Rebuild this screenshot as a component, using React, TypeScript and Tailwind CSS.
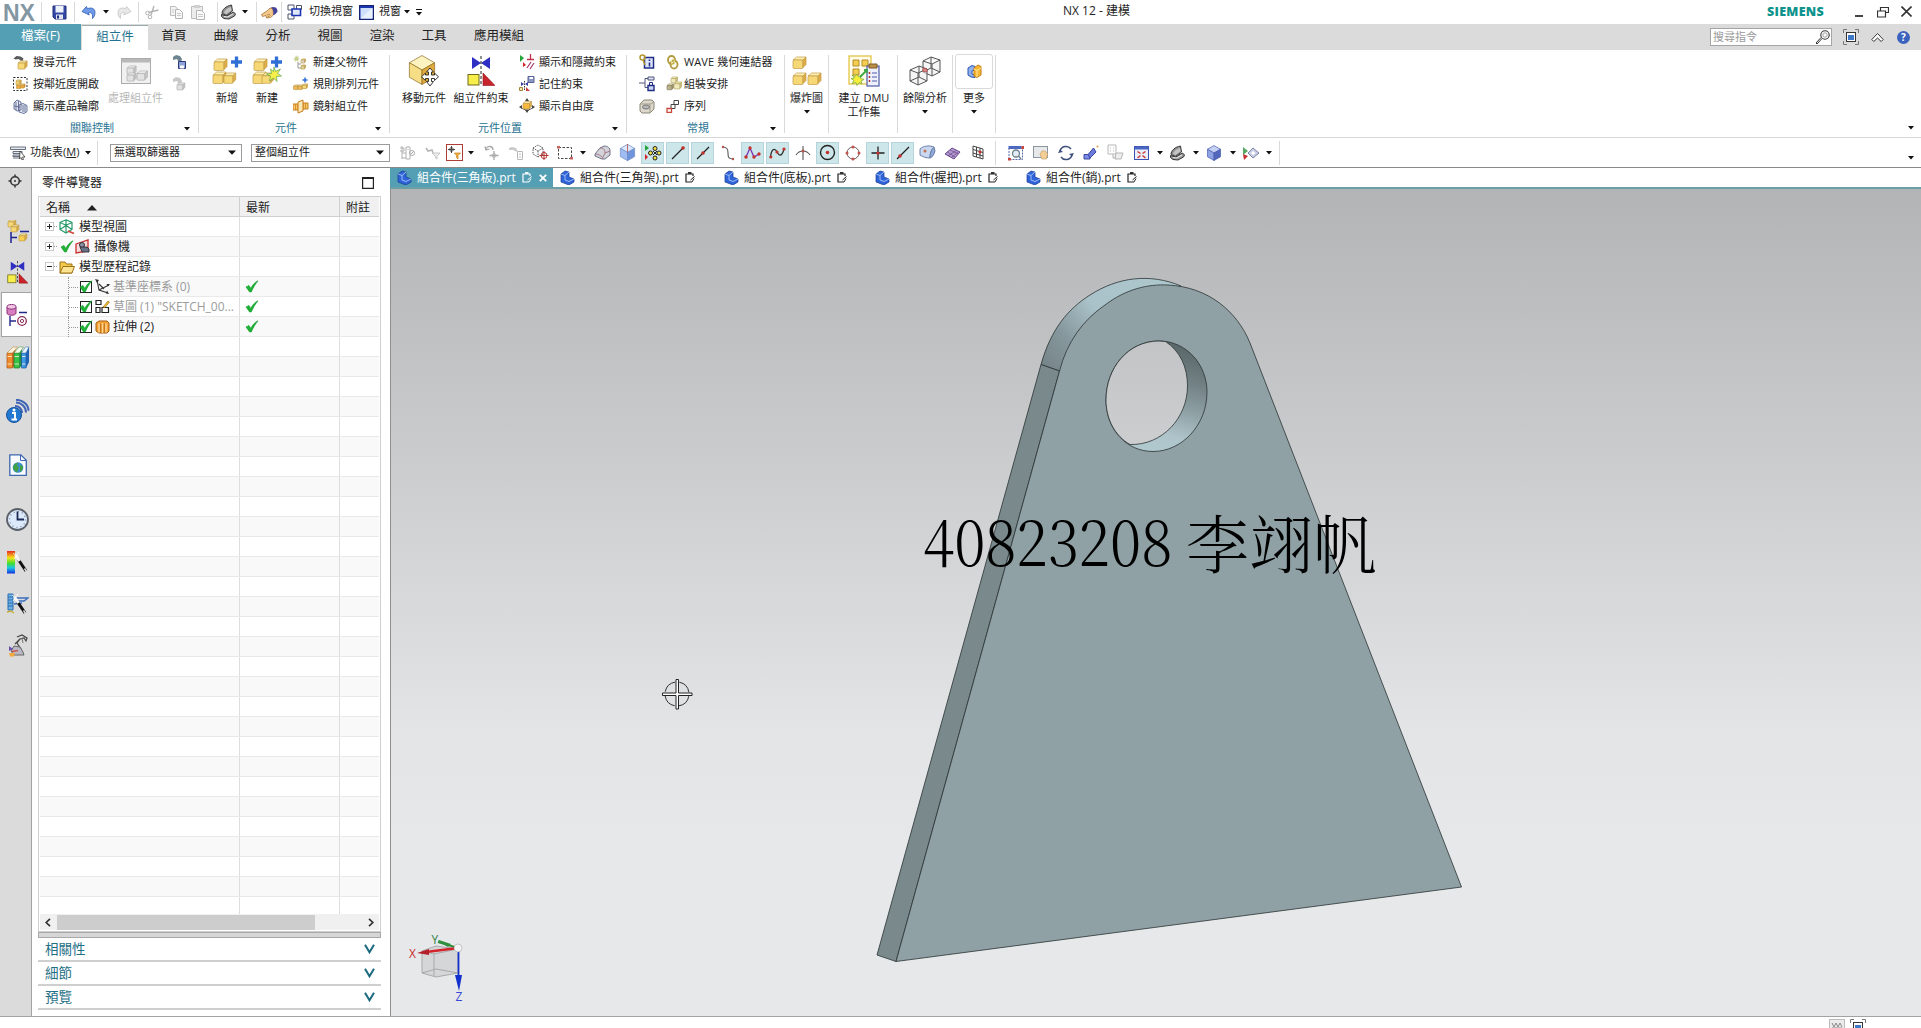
import React from "react";

type Kids = { children?: React.ReactNode };

/* ---------- drawing helpers ---------- */
function Svg({ w = 16, h, vw, vh, children }: Kids & { w?: number; h?: number; vw?: number; vh?: number }) {
  const hh = h ?? w;
  return (
    <svg width={w} height={hh} viewBox={`0 0 ${vw ?? w} ${vh ?? hh}`} fill="none" className="block shrink-0">
      {children}
    </svg>
  );
}

const GOLD = { t: "#fdf0b4", l: "#f6d877", r: "#dfae48", s: "#c29c46" };
const GREY = { t: "#f6f6f6", l: "#e2e2e2", r: "#c8c8c8", s: "#aeaeae" };
const BLUE = { t: "#c3d3f6", l: "#86a4e6", r: "#4a68c0", s: "#3f56a6" };

function Box({ x, y, s, c = GOLD }: { x: number; y: number; s: number; c?: typeof GOLD }) {
  const d = s * 0.3;
  return (
    <g stroke={c.s} strokeWidth={0.7} strokeLinejoin="round">
      <path d={`M${x} ${y + d}l${d * 1.2} ${-d}h${s - d * 0.2}l${-d} ${d}z`} fill={c.t} />
      <rect x={x} y={y + d} width={s} height={s * 0.85} rx={s * 0.1} fill={c.l} />
      <path d={`M${x + s} ${y + d}l${d} ${-d}v${s * 0.75}l${-d} ${d}z`} fill={c.r} />
    </g>
  );
}

function Cube({ x, y, s, c = BLUE }: { x: number; y: number; s: number; c?: typeof GOLD }) {
  const k = s * 0.87;
  const h = s / 2;
  return (
    <g stroke={c.s} strokeWidth={0.7} strokeLinejoin="round">
      <path d={`M${x} ${y - s}l${k} ${h}l${-k} ${h}l${-k} ${-h}z`} fill={c.t} />
      <path d={`M${x - k} ${y - h}l${k} ${h}v${s}l${-k} ${-h}z`} fill={c.l} />
      <path d={`M${x + k} ${y - h}l${-k} ${h}v${s}l${k} ${-h}z`} fill={c.r} />
    </g>
  );
}

const Plus = ({ x, y, s = 5 }: { x: number; y: number; s?: number }) => (
  <path d={`M${x - s} ${y}h${2 * s}M${x} ${y - s}v${2 * s}`} stroke="#2f6fd6" strokeWidth={s * 0.6} />
);

const Arrow = () => (
  <Svg w={6} h={4}>
    <path d="M0 0h6L3 3.6z" fill="#111" />
  </Svg>
);

const Check = () => (
  <Svg w={14} h={13}>
    <path d="M1 7l3-1.6 1.8 3C7.500 5 9.500 2.500 13 .8 10 4.500 8 8 6.300 12H4.600z" fill="#1fb235" stroke="#139a2b" strokeWidth={0.6} />
  </Svg>
);

/* ---------- quick-access icons ---------- */
const Save = () => (
  <Svg w={15}>
    <path d="M1 1h13v13H3l-2-2z" fill="#3446a5" stroke="#22307c" />
    <rect x={3.500} y={1} width={8} height={6.500} fill="#eef2fb" />
    <rect x={4} y={9.500} width={7} height={4.500} fill="#dfe3ee" />
    <rect x={5} y={10.500} width={2} height={3} fill="#22307c" />
  </Svg>
);
const Undo = ({ flip = false }: { flip?: boolean }) => (
  <svg width={15} height={14} viewBox="0 0 15 14" fill="none" className={flip ? "block -scale-x-100" : "block"}>
    <path d="M1 6.500l4.500-5 .8 2.200c4.500-1.700 7.700 0 7.700 3.800 0 2.500-1 4.500-2.500 6 .5-4-.5-6.500-4.200-5.800l1 2.300z" fill={flip ? "#e8e8e8" : "#6f9ae6"} stroke={flip ? "#c2c2c2" : "#2d5bb4"} strokeWidth={0.8} strokeLinejoin="round" />
  </svg>
);
const Cut = () => (
  <Svg w={15}>
    <path d="M9 1L6 10M3.500 7.500L13.500 5" stroke="#b4b4b4" strokeWidth={1.400} />
    <circle cx={5} cy={12} r={1.800} stroke="#b4b4b4" />
    <circle cx={2.500} cy={8} r={1.800} stroke="#b4b4b4" />
  </Svg>
);
const Copy = () => (
  <Svg w={15}>
    <path d="M1.500 1.500h5l1.500 2v7H1.500z" fill="#f3f3f3" stroke="#bcbcbc" />
    <path d="M6.500 4.500h4l3 3v6h-7z" fill="#f8f8f8" stroke="#b4b4b4" />
    <path d="M8 8.500h4M8 10.500h4M3 5h2M3 7h2" stroke="#c9c9c9" />
  </Svg>
);
const Paste = () => (
  <Svg w={16}>
    <path d="M1.500 2.500h11v12h-11z" fill="#ececec" stroke="#bcbcbc" />
    <path d="M4 1h6v3H4z" fill="#cfcfcf" />
    <path d="M6.500 6.500h5l3 3v6h-8z" fill="#fafafa" stroke="#b4b4b4" />
    <path d="M8 10.500h5M8 12.500h5" stroke="#c9c9c9" />
  </Svg>
);
const Iron = () => (
  <Svg w={17} h={16}>
    <path d="M2 9.500C2 5.500 6 2 11.500 1l1 6-6 4.500z" fill="#8e8e8e" stroke="#3a3a3a" strokeLinejoin="round" />
    <path d="M4 9c.5-2.500 3-5 7-6l.5 3.500L6.500 10z" fill="#c4c4c4" />
    <path d="M1.500 10.500l5 1.500 7-4 2 2-1 2-5.500 3-5-.5-2.500-2z" fill="#9a9a9a" stroke="#333" strokeLinejoin="round" />
    <path d="M4 12.500l3.500.5 5.500-3" stroke="#eee" />
  </Svg>
);
const Hand = () => (
  <Svg w={17} h={13}>
    <path d="M.5 8.500L6 5l3-3 3 1 .5 6-3 2.500-4 .5-.5-2.500-3.500 1z" fill="#f4c88a" stroke="#a5733a" strokeWidth={0.800} strokeLinejoin="round" />
    <path d="M6 9l3-1M6.500 11l3-1.500" stroke="#a5733a" strokeWidth={0.700} />
    <path d="M10 1l4 .2c1.500.5 2.500 2 2.500 4.500L14 8.500l-2 .5c1-3 0-6-2-8z" fill="#45429c" />
  </Svg>
);
const SwitchWin = () => (
  <Svg w={16}>
    <path d="M1 1h6v5H1zM9.500 1.500h5v4h-5zM1 10h6v5H1z" fill="#fff" stroke="#4a5568" />
    <path d="M5 5h8.500v6.500H5z" fill="#dfe8fb" stroke="#1c35b0" strokeWidth={1.600} />
  </Svg>
);
const WinIcon = () => (
  <Svg w={15}>
    <rect x={0.500} y={0.500} width={14} height={14} fill="#1c35b0" stroke="#16246f" />
    <rect x={1.500} y={3} width={12} height={10.500} fill="#cfe0fa" />
    <path d="M1.500 13.500L13.500 3v10.500z" fill="#e9f1fd" />
  </Svg>
);

/* ---------- ribbon icons ---------- */
const FindComp = ({ grey = false }: { grey?: boolean }) => (
  <Svg w={15}>
    <path d="M.5 3.500l3-2.500 4 .5 3 2-1 2.500-2-.5-2-1.500-3 .5z" fill={grey ? "#c4c4c4" : "#5a5a5a"} />
    <Box x={5} y={6} s={7} c={grey ? GREY : GOLD} />
  </Svg>
);
const Proximity = () => (
  <Svg w={15}>
    <rect x={0.500} y={0.500} width={13.500} height={13} stroke="#333" strokeDasharray="2 1.500" />
    <Box x={3} y={3} s={4} />
    <Box x={3.500} y={7} s={4} c={{ ...GOLD, l: "#f5a63a", r: "#d9822b" }} />
    <Box x={7.500} y={7} s={3.500} c={{ ...GOLD, l: "#f5a63a", r: "#d9822b" }} />
  </Svg>
);
const Outline = () => (
  <Svg w={15}>
    <g stroke="#5b6691" strokeWidth={0.900}>
      <path d="M1 4l3-3 4 2v8l-4 1-3-2zM6 6l4-1.500 4 2v6L11 14.500 6 13z" fill="#e6eaf5" />
      <path d="M3 3v8M5.500 2v9M10 6v7M12 6v7M1 7l6 1" />
    </g>
  </Svg>
);
const ProcAsm = () => (
  <Svg w={30} h={29}>
    <rect x={0.500} y={1.500} width={29} height={25} fill="#f1f1f1" stroke="#ababab" />
    <rect x={1} y={2} width={28} height={3.500} fill="#b9b9b9" />
    <Box x={6} y={9} s={7} c={GREY} />
    <Box x={6} y={16} s={7} c={GREY} />
    <Box x={16} y={14} s={8} c={GREY} />
  </Svg>
);
const SaveComp = ({ grey = false }: { grey?: boolean }) => (
  <Svg w={15}>
    <path d="M1 2l3-2 4 1 2 3-1 3-3-1-1-2-4 1z" fill={grey ? "#c9c9c9" : "#6d8590"} />
    {grey ? <Box x={5} y={6} s={6} c={GREY} /> : <path d="M6.500 6.500h7v7h-7z" fill="#8ea3d8" stroke="#2a377a" />}
    {!grey && <path d="M8 10.500h4v3H8z" fill="#fff" />}
  </Svg>
);
const AddComp = ({ fresh = false }: { fresh?: boolean }) => (
  <Svg w={31} h={30}>
    <Box x={2} y={3} s={10} />
    <Box x={1} y={16} s={10} />
    <Box x={fresh ? 10 : 12} y={17} s={9} />
    <Plus x={24.500} y={6} s={5.500} />
    {fresh && <path d="M22 11l1.500 4.500 5-2.500-3 4.500 4 2.500-5 .5.500 5-3.500-3.500-4 3 1-5-4-2 5-.5-1-4.500 3 2.500z" fill="#f7f04a" stroke="#5aa64a" strokeWidth={0.700} />}
  </Svg>
);
const NewParent = () => (
  <Svg w={15}>
    <path d="M3 0l1 2 2-1-1 2 2 1-2 .5.500 2.500-2-1.500L1.500 7 2 4.500 0 4l2-1z" fill="#c6cf8d" />
    <path d="M5 7v6h3M5 9h3" stroke="#999" />
    <Box x={8} y={4} s={3.500} c={{ ...GOLD, l: "#dadada", r: "#bbb" }} />
    <Box x={8} y={10} s={3.500} c={{ ...GOLD, l: "#ddd7a4", r: "#bbb" }} />
  </Svg>
);
const PatternComp = () => (
  <Svg w={15}>
    <Plus x={12} y={3} s={2.500} />
    <Box x={0.500} y={8} s={4} c={{ ...GOLD, l: "#f2b95c" }} />
    <Box x={5} y={8} s={4} c={{ ...GOLD, l: "#f2b95c" }} />
    <Box x={9.500} y={7} s={4} />
  </Svg>
);
const MirrorAsm = () => (
  <Svg w={16} h={15}>
    <path d="M0 5h5v6H0zM10 4h5v6h-5z" fill="#f8c765" stroke="#c77e1e" />
    <path d="M5 3l5-2v11l-5 2z" fill="#fbe6b4" stroke="#c77e1e" />
    <path d="M2.500 5v6M12.500 4v6" stroke="#c77e1e" strokeWidth={0.700} />
  </Svg>
);
const MoveComp = () => (
  <Svg w={32} h={32}>
    <Cube x={14} y={15} s={14.500} c={{ t: "#fdf3c0", l: "#f6de86", r: "#dfa93e", s: "#8d6c25" }} />
    <path d="M22 13l3.500 4h-2v3h3v-2l4 3.800-4 3.700v-2h-3v3h2L22 31l-3.500-4.500h2v-3h-3v2l-4-3.700 4-3.800v2h3v-3h-2z" fill="#fff" stroke="#222" strokeWidth={0.900} />
  </Svg>
);
const Constraint = ({ w = 28 }: { w?: number }) => (
  <Svg w={w} vw={28} vh={30} h={(w * 30) / 28}>
    <path d="M5 1l9 6-9 6zM23 1l-9 6 9 6z" fill="#2f2fc4" />
    <path d="M14 0v30" stroke="#222" strokeDasharray="3 2" />
    <rect x={1} y={18.500} width={11} height={10.500} fill="#f7ee4a" stroke="#6d6a1c" />
    <path d="M16 17v12.500h12z" fill="#c8242b" stroke="#8b1117" strokeWidth={0.600} />
  </Svg>
);
const ShowHide = () => (
  <Svg w={16}>
    <path d="M1 1l4 3-4 4z" fill="#25a53a" />
    <path d="M4 8l3 3-3 2z" fill="#d3232a" />
    <path d="M8 5.500h7M11.500 0v5.500" stroke="#c3304a" strokeWidth={1.300} />
    <path d="M8 14l4-6M11 15l4-6" stroke="#a8346a" strokeWidth={1.200} />
  </Svg>
);
const Remember = () => (
  <Svg w={16}>
    <path d="M9 .5h6v6H9z" fill="#8c97c4" stroke="#5a6596" />
    <path d="M10.500 1h3.500v2h-3.500z" fill="#fff" />
    <path d="M2 6l3 2-3 2zM9 6L6 8l3 2z" fill="#3c3ca8" />
    <path d="M5.500 5v10" stroke="#333" strokeDasharray="1.500 1" />
    <path d="M.5 11.500h3v3h-3z" stroke="#a4863a" fill="#f6e9b4" />
    <path d="M7 11v4h4z" fill="#c8403b" />
  </Svg>
);
const Dof = () => (
  <Svg w={16}>
    <path d="M8 0l2 3H6zM8 15l2-3H6zM0 9l3-2v4zM16 9l-3-2v4z" fill="#444" />
    <path d="M2 9c3 4 9 4 12 0" stroke="#444" />
    <Box x={4} y={3.500} s={6.500} c={{ ...GOLD, l: "#f6b93e" }} />
  </Svg>
);
const InfoLink = () => (
  <Svg w={16}>
    <path d="M5.500 3.500h9v10.500h-9z" fill="#dfe6fa" stroke="#1f2c86" strokeWidth={1.500} />
    <path d="M10.500 5.500v1.500M10.500 8.500v4" stroke="#1f2c86" strokeWidth={1.600} />
    <circle cx={3.500} cy={3.500} r={2.500} stroke="#b79a2d" strokeWidth={1.500} />
    <path d="M4 6l2 5" stroke="#b79a2d" strokeWidth={1.500} />
  </Svg>
);
const TreeLock = () => (
  <Svg w={16}>
    <path d="M0 7h6M6 2.500v9M6 2.500h3M6 11.500h3" stroke="#50577c" />
    <path d="M9 1h6v3H9z" fill="#dfe3f2" stroke="#50577c" />
    <path d="M9 9.500h6v5H9z" fill="#cdd6f5" stroke="#1f2c86" strokeWidth={1.400} />
    <path d="M10.500 9V6.500h3V9" stroke="#1f2c86" />
  </Svg>
);
const Disc = () => (
  <Svg w={16}>
    <path d="M1 6l4-4h8l2 2v7l-4 4H3l-2-2z" fill="#dcd8cc" stroke="#8b8674" strokeLinejoin="round" />
    <path d="M1 6h10l4-2M11 6v9" stroke="#a29d8a" />
    <ellipse cx={7} cy={9} rx={3.500} ry={2} fill="#b9b9b9" stroke="#777" />
  </Svg>
);
const Wave = () => (
  <Svg w={15}>
    <g stroke="#b29a3e" strokeWidth={1.800}>
      <ellipse cx={5.500} cy={5} rx={3.500} ry={4} />
      <ellipse cx={8} cy={9.500} rx={3.500} ry={4} />
    </g>
    <ellipse cx={7} cy={7} rx={1.500} ry={3} stroke="#efe08a" />
  </Svg>
);
const Arrange = () => (
  <Svg w={16}>
    <Box x={5} y={1} s={5} c={{ ...GOLD, l: "#f1ebbc", r: "#cfc080", s: "#b5a96c" }} />
    <Box x={1} y={8} s={5} c={{ ...GOLD, l: "#b9b38f", r: "#968f66", s: "#8a8363" }} />
    <Box x={8} y={6} s={6} c={{ ...GOLD, l: "#f1ebbc", r: "#cfc080", s: "#b5a96c" }} />
  </Svg>
);
const Sequence = () => (
  <Svg w={14}>
    <path d="M8 1.500h4.500v4H8zM5 5.500h4v4H5z" fill="#fff" stroke="#444" />
    <path d="M1 9.500h4.500v4H1z" fill="#fff" stroke="#c94a3a" strokeWidth={1.300} />
  </Svg>
);
const Explode = () => (
  <Svg w={30} h={30}>
    <Box x={1} y={1} s={10} />
    <Box x={1} y={17} s={10} />
    <Box x={16} y={17} s={10} />
  </Svg>
);
const Dmu = () => (
  <Svg w={32} h={33}>
    <rect x={1} y={1} width={22} height={28} fill="#fffde8" stroke="#e3c445" strokeWidth={1.300} />
    <path d="M5 5h6v6H5zM14 5h6v6h-6zM5 14h6v6H5z" fill="#f3cf51" stroke="#b58a2c" />
    <path d="M9 19l1.500 3 3-2-1 3.500 3.500 1-3 1.500 1 3-3-1.500-2 3-1-3-4 1 2-3-3-2 3.500-.500L4 20l3 1.500z" fill="#f9ee3a" stroke="#6aa63a" strokeWidth={0.700} />
    <rect x={19} y={11} width={12} height={20} fill="#eef1fd" stroke="#4c5ba6" strokeWidth={1.200} />
    <path d="M21 9h8v4h-8z" fill="#b98f46" stroke="#7d5d28" />
    <path d="M24 18h5M24 22h5M24 26h5" stroke="#4c5ba6" />
    <path d="M21.500 17v2M21.500 21v2M21.500 25v2" stroke="#b3342e" strokeWidth={1.500} />
    <path d="M12 22l7-7m-3 0h3v3" stroke="#3da74a" strokeWidth={1.800} />
  </Svg>
);
const Clearance = () => (
  <Svg w={32} h={31}>
    <g stroke="#555" strokeWidth={1} strokeLinejoin="round">
      <path d="M14 5l8-4 9 3v12l-8 4-9-4zM14 5l9 3 8-4M23 8v12M22 1v11l-8 4M22 12l9 4" fill="#eeeeee" fillOpacity={0.600} />
      <path d="M1 14l9-4 8 3v12l-9 4-8-4zM1 14l8 3 9-4M9 17v12M10 10v11l-9 4M10 21l8 4" fill="#eeeeee" fillOpacity={0.600} />
    </g>
    <path d="M14 12l4 1v3l-4-.5z" fill="#d98989" stroke="#b04444" strokeWidth={0.700} />
  </Svg>
);
const More = () => (
  <Svg w={15}>
    <path d="M1 4l4-2.500 3 1V6L5 7v3l3 1v2.500l-4-.5-3-2z" fill="#8fb0ee" stroke="#2c52ad" />
    <path d="M7 4l4-3 3 1.500V11l-4 2.500L7 12z" fill="#f7b731" stroke="#c67d13" />
    <path d="M7 5l3 1.500L14 4M10 6.500V13" stroke="#fde39b" />
  </Svg>
);

/* ---------- selection / view toolbar icons ---------- */
const I: Record<string, React.ReactNode> = {
  menu: (
    <Svg w={17} h={14}>
      <path d="M.5 1h15v2.500H.5zM3 5.500h9v2H3zM3 9h7v1.500H3zM3 12h7" fill="#e5e9f0" stroke="#5a6270" strokeWidth={0.900} />
      <path d="M10 5l5 6h-2.500l1 2.500-1.500.5-1-2.500-1.500 1.500z" fill="#fff" stroke="#333" strokeWidth={0.800} />
    </Svg>
  ),
  g1: (
    <Svg w={16}>
      <path d="M1 3h4v3H1M3 1v13M3 8h4M3 13h4M7 2h4v12H7zM9 4v1" stroke="#b0b0b0" />
      <circle cx={13} cy={8} r={2.500} stroke="#b0b0b0" />
      <path d="M11 10l4-4" stroke="#b0b0b0" />
    </Svg>
  ),
  g2: (
    <Svg w={16}>
      <path d="M1 3l2 3 4-1 1 3" stroke="#b5b5b5" strokeWidth={1.600} />
      <path d="M7 8h8l-3 3.500V14l-1.500-1v-1.500z" fill="#eee" stroke="#c6c6c6" />
    </Svg>
  ),
  filt: (
    <Svg w={17}>
      <rect x={0.500} y={0.500} width={16} height={16} fill="#fff" stroke="#b03c38" />
      <path d="M2 5.500h7M5.500 2v7" stroke="#444" />
      <circle cx={5.500} cy={5.500} r={1.900} stroke="#444" strokeWidth={0.800} />
      <path d="M8.500 9h6L12 11.500V15l-1.500-1.500v-2z" fill="#f6b13c" stroke="#c67d13" strokeWidth={0.700} />
    </Svg>
  ),
  g3: (
    <Svg w={16}>
      <path d="M2 4c2-4 7-3 7 1M1 1.500L2 5l3.500-1" stroke="#a8a8a8" strokeWidth={1.300} />
      <path d="M10 6v9M5.500 10.500h9" stroke="#a8a8a8" strokeWidth={1.300} />
      <circle cx={10} cy={10.500} r={2} stroke="#b8b8b8" />
    </Svg>
  ),
  g4: (
    <Svg w={16}>
      <path d="M1 3l3-1 4 1 2 4-3-1-2-1H1z" fill="#c9c9c9" />
      <path d="M9.500 6.500h5v8h-5zM11 9h2M11 12h2" stroke="#b8b8b8" />
    </Svg>
  ),
  dcube: (
    <Svg w={17}>
      <path d="M1 4l5-3 5 3v6l-5 3-5-3zM1 4l5 3 5-3M6 7v6" stroke="#555" strokeDasharray="1.500 1" />
      <circle cx={12} cy={11.500} r={3} stroke="#b3342e" />
      <path d="M12 7v9M7.500 11.500h9" stroke="#b3342e" />
    </Svg>
  ),
  rect: (
    <Svg w={16}>
      <rect x={1.500} y={2.500} width={13} height={11} stroke="#444" strokeDasharray="2.500 1.500" />
      <path d="M0 1h3v2.500H0zM13 12h3v2.500h-3z" fill="#c9655f" />
    </Svg>
  ),
  shade: (
    <Svg w={17} h={15}>
      <path d="M1 9l5-6 4-2c4 0 6 2 6 5v4l-5 4H8L1 11z" fill="#d3d3dc" stroke="#6f7388" strokeLinejoin="round" />
      <path d="M6 3c3 0 5 1 5 5l-3 6M1 9c3 0 5 1 7 3M11 8l5-2" stroke="#a0707a" strokeWidth={0.900} />
    </Svg>
  ),
  bcube: (
    <Svg w={17}>
      <Cube x={8.500} y={8.500} s={8.200} c={{ t: "#dbe8fb", l: "#9fbdf0", r: "#6f95dd", s: "#6c8bc9" }} />
      <path d="M8.500 0v8.500" stroke="#b3342e" strokeWidth={0.700} />
    </Svg>
  ),
  pts: (
    <Svg w={18}>
      <path d="M1 1l4 3-4 3z" fill="#25a53a" />
      <path d="M1 10l3 3-3 3z" fill="#d3232a" />
      <g fill="#f4e23f" stroke="#222">
        <circle cx={11} cy={4.500} r={2} />
        <circle cx={6.500} cy={9} r={2} />
        <circle cx={15} cy={9} r={2} />
        <circle cx={11} cy={14} r={2} />
      </g>
      <path d="M9 7l4 4M13 7l-4 4" stroke="#222" />
    </Svg>
  ),
  end: (
    <Svg w={16}>
      <path d="M2 14L14 2" stroke="#222" strokeWidth={1.300} />
      <circle cx={13} cy={3} r={1.800} fill="#c4302c" />
    </Svg>
  ),
  mid: (
    <Svg w={16}>
      <path d="M2 14L14 2" stroke="#222" strokeWidth={1.300} />
      <circle cx={8} cy={8} r={1.800} fill="#c4302c" />
    </Svg>
  ),
  ctrl: (
    <Svg w={14} h={16}>
      <path d="M1 2c5 0 6 2 6 6s0 6 6 6" stroke="#555" strokeWidth={1.100} />
      <circle cx={2} cy={2} r={1.200} fill="#b3544c" />
      <circle cx={12} cy={14} r={1.200} fill="#b3544c" />
    </Svg>
  ),
  poly: (
    <Svg w={17} h={15}>
      <path d="M2 12L6 3l4 9 5-3" stroke="#7a2fb8" strokeWidth={1.300} />
      <g fill="#c4302c">
        <circle cx={2} cy={12} r={1.700} />
        <circle cx={6} cy={3} r={1.700} />
        <circle cx={10} cy={12} r={1.700} />
        <circle cx={15} cy={9} r={1.700} />
      </g>
    </Svg>
  ),
  spl: (
    <Svg w={17} h={14}>
      <path d="M1.500 11C2.500 2 6 2 8 6s5 5 7-3" stroke="#333" strokeWidth={1.300} />
      <g fill="#c4302c">
        <circle cx={1.800} cy={11} r={1.600} />
        <circle cx={8} cy={6} r={1.600} />
        <circle cx={15} cy={3} r={1.600} />
      </g>
    </Svg>
  ),
  inter: (
    <Svg w={16}>
      <path d="M8 1v14M1 10c2-3 4-4 7-4s5 1 7 4" stroke="#555" strokeWidth={1.100} />
      <circle cx={8} cy={6} r={1.500} fill="#b3544c" />
    </Svg>
  ),
  arc: (
    <Svg w={17}>
      <circle cx={8.500} cy={8.500} r={7} stroke="#222" strokeWidth={1.400} />
      <circle cx={8.500} cy={8.500} r={1.800} fill="#c4302c" />
    </Svg>
  ),
  quad: (
    <Svg w={16}>
      <circle cx={8} cy={8} r={6} stroke="#6b5a5a" />
      <g fill="#c4514c">
        <circle cx={8} cy={2} r={1.500} />
        <circle cx={8} cy={14} r={1.500} />
        <circle cx={2} cy={8} r={1.500} />
        <circle cx={14} cy={8} r={1.500} />
      </g>
    </Svg>
  ),
  exist: (
    <Svg w={16}>
      <path d="M8 1.500v13M1.500 8h13" stroke="#222" strokeWidth={1.300} />
      <circle cx={8} cy={8} r={1.600} fill="#c4302c" />
    </Svg>
  ),
  onc: (
    <Svg w={16}>
      <path d="M2 14L14 2" stroke="#222" strokeWidth={1.300} />
      <circle cx={5} cy={11} r={1.800} fill="#c4302c" />
    </Svg>
  ),
  face: (
    <Svg w={17} h={15}>
      <path d="M1 4c3-3 9-4 14-2-3 3-4 6-4 11-4 0-7-1-10-3z" fill="#c9d8f0" stroke="#6a7fa8" strokeLinejoin="round" />
      <path d="M11 13c0-5 1-8 4-11l1 4c-1 3-2 6-5 7z" fill="#8fa9d8" stroke="#6a7fa8" />
      <circle cx={6} cy={6} r={1.500} fill="#c4714c" />
    </Svg>
  ),
  mesh: (
    <Svg w={17} h={14}>
      <path d="M1 8l7-6 8 4-6 7z" fill="#b79ad0" stroke="#65468c" />
      <path d="M3.500 6l7.500 5M6 4l8 4M4 10l8-5.500M7 12l7-6" stroke="#65468c" strokeWidth={0.700} />
    </Svg>
  ),
  grid: (
    <Svg w={14} h={15}>
      <path d="M2 1l10 3v10L2 11zM5.500 2v10M9 3v10M2 4.500l10 3M2 8l10 3" stroke="#444" />
      <circle cx={9} cy={7} r={1.500} fill="#c4302c" />
    </Svg>
  ),
  fit: (
    <Svg w={16}>
      <path d="M.5 1h13v3H.5z" fill="#4a66c4" />
      <rect x={1} y={3} width={13.500} height={11.500} stroke="#5a6bb0" strokeDasharray="2 1" />
      <circle cx={8} cy={8.500} r={3.500} fill="#e3edf3" stroke="#6b7f8c" strokeWidth={1.300} />
      <path d="M10.500 11l2.500 3" stroke="#6b7f8c" strokeWidth={1.300} />
      <path d="M0 13h3v2.500H0zM13.500 1H16v3h-2.500z" fill="#c9453f" />
    </Svg>
  ),
  pan: (
    <Svg w={16} h={14}>
      <rect x={0.500} y={0.500} width={14} height={11} fill="#e6e8ea" stroke="#8b96a0" />
      <path d="M7 8l2-3 3 0 2.500 3-1 5H9z" fill="#f4cf95" stroke="#c9a063" strokeWidth={0.700} />
    </Svg>
  ),
  rot: (
    <Svg w={16}>
      <path d="M2 6a6.200 6.200 0 0111-2M14 10a6.200 6.200 0 01-11 2" stroke="#3e4f7c" strokeWidth={1.500} />
      <path d="M0 8l2-3.500L5 7zM16 8l-2 3.500L11 9z" fill="#3e4f7c" />
    </Svg>
  ),
  torch: (
    <Svg w={16} h={15}>
      <path d="M1 9.500h6v4.500H1z" fill="#7d8ce6" stroke="#3a46a0" />
      <path d="M5 9.500L10.500 3l2.500 4-6 6z" fill="#6a7bdc" stroke="#3a46a0" />
      <circle cx={14.500} cy={1.500} r={1} fill="#e0a53a" />
    </Svg>
  ),
  cpy: (
    <Svg w={17}>
      <path d="M1 1h8v9H1zM3 4h1M6 4h1M3 7h1M6 7h1" stroke="#b5b5b5" />
      <path d="M6 10v4h3M9 9h7l-2 6H8z" fill="#eee" stroke="#b5b5b5" />
    </Svg>
  ),
  win4: (
    <Svg w={15} h={14}>
      <rect x={0.500} y={0.500} width={14} height={13} fill="#e9eefb" stroke="#3b53ae" />
      <path d="M.5.500h14v3H.5z" fill="#4a66c4" />
      <path d="M3.500 5.500l3 2M11.500 5.500l-3 2M3.500 12l3-2.500M11.500 12l-3-2.500" stroke="#d0392f" strokeWidth={1.500} />
    </Svg>
  ),
  scube: (
    <Svg w={16}>
      <Cube x={8} y={8} s={7.500} c={{ t: "#c5d0f5", l: "#8ea3e6", r: "#5266bb", s: "#4a5cae" }} />
    </Svg>
  ),
  clip: (
    <Svg w={18} h={14}>
      <path d="M1 1l5 4-5 4z" fill="#56a862" />
      <path d="M1 8l5 2-4 4z" fill="#c4302c" />
      <path d="M6 7l5-5 6 5-6 5z" fill="#c9d0e6" stroke="#7a84a8" />
      <path d="M9 7l2-2 2.500 2L11 9z" fill="#fff" />
    </Svg>
  ),
};

const Cell = ({ k, w = "w-[25px]", on = false }: { k: string; w?: string; on?: boolean }) => (
  <div className={`flex h-[22px] shrink-0 items-center justify-center ${w}`}>
    <div className={on ? "flex h-[22px] w-[23px] shrink-0 items-center justify-center border border-[#b3d5db] bg-[#cde6ea]" : "shrink-0"}>
      {k === "v" ? <Arrow /> : k === "iron" ? <Iron /> : I[k]}
    </div>
  </div>
);

const VSep = ({ c = "" }: { c?: string }) => <div className={`w-px shrink-0 bg-[#d9d9d9] ${c}`} />;

/* ---------- top bars ---------- */
function TitleBar() {
  return (
    <div className="flex h-6 items-center bg-white text-[11px] text-[#222]">
      <div className="mt-[2px] w-[41px] pl-[3px] font-['Liberation_Sans'] text-[23px] leading-[22px] font-bold text-[#8397a3]">NX</div>
      <VSep c="h-5" />
      <div className="flex w-8 justify-center pl-[2px]"><Save /></div>
      <VSep c="h-5" />
      <div className="flex w-[26px] justify-center"><Undo /></div>
      <div className="flex w-[10px] justify-center"><Arrow /></div>
      <div className="flex w-[27px] justify-center"><Undo flip /></div>
      <VSep c="h-5" />
      <div className="flex w-[27px] justify-center"><Cut /></div>
      <div className="flex w-[20px] justify-center"><Copy /></div>
      <div className="flex w-[24px] justify-center"><Paste /></div>
      <VSep c="ml-[7px] h-5" />
      <div className="flex w-[20px] justify-center"><Iron /></div>
      <div className="flex w-[14px] justify-center"><Arrow /></div>
      <VSep c="ml-1 h-5" />
      <div className="flex w-[24px] justify-center pl-px"><Hand /></div>
      <VSep c="h-5" />
      <div className="ml-[5px] w-[22px]"><SwitchWin /></div>
      <div className="w-[50px] pb-[2px] whitespace-nowrap">切換視窗</div>
      <div className="w-5"><WinIcon /></div>
      <div className="w-[25px] pb-[2px] whitespace-nowrap">視窗</div>
      <Arrow />
      <div className="ml-[6px]">
        <Svg w={6} h={7}><path d="M0 .5h6" stroke="#111" /><path d="M0 3h6L3 6.600z" fill="#111" /></Svg>
      </div>
      <div className="ml-[641px] w-[704px] pb-[2px] text-[12px] whitespace-nowrap">NX 12 - 建模</div>
      <div className="w-[88px] font-['Open_Sans'] text-[12.5px] leading-6 font-extrabold tracking-[0.3px] text-[#0d938c]">SIEMENS</div>
      <div className="mt-[7px] h-[2px] w-2 bg-[#444]" />
      <div className="ml-[14px]">
        <Svg w={12} h={11}><path d="M3.500 3.500v-3h8v5h-3M.5 4h8v6h-8z" stroke="#333" strokeWidth={1.200} /></Svg>
      </div>
      <div className="mb-[2px] ml-3">
        <Svg w={11}><path d="M.5.500l10 10M10.500.500l-10 10" stroke="#333" strokeWidth={1.600} /></Svg>
      </div>
    </div>
  );
}

const FullIcon = () => (
  <Svg w={16}>
    <path d="M.5 4V.5H4M12 .5h3.500V4M15.500 12v3.500H12M4 15.500H.5V12" stroke="#777" />
    <rect x={3.500} y={3.500} width={9} height={9} fill="#fff" stroke="#333" />
    <rect x={5} y={6} width={6} height={5} fill="#3f78c9" />
  </Svg>
);

function TabBar() {
  const tabs = ["首頁", "曲線", "分析", "視圖", "渲染", "工具"];
  return (
    <div className="flex h-[26px] items-center bg-[#dbdbdb] text-[12.5px] text-[#222]">
      <div className="flex h-full w-[81px] items-center justify-center bg-[#559fb5] pb-[2px] text-white">檔案(F)</div>
      <div className="mt-px ml-px flex h-[25px] w-[66px] items-center justify-center border-t border-[#9aa] bg-white pb-[2px] text-[#1f7391]">組立件</div>
      {tabs.map((t) => (
        <div key={t} className="w-[52px] pb-[2px] text-center">{t}</div>
      ))}
      <div className="w-[78px] pb-[2px] text-center">應用模組</div>
      <div className="mr-[11px] ml-auto flex h-[18px] w-[122px] items-center justify-between border border-[#a5a5a5] bg-white pl-[2px] text-[11px] text-[#9a9a9a]">
        <span>搜尋指令</span>
        <Svg w={16} h={15}>
          <circle cx={10} cy={5} r={4.200} stroke="#333" strokeWidth={1.100} />
          <circle cx={10} cy={5} r={2.200} stroke="#888" strokeWidth={0.800} />
          <path d="M7 8.500L2 14l-1-1 5-5.500" stroke="#333" fill="#fff" />
        </Svg>
      </div>
      <FullIcon />
      <div className="ml-3">
        <Svg w={13} h={11}><path d="M.8 7.500l5.700-6 5.700 6-2 2-3.700-3.500L2.800 9.500z" fill="#fff" stroke="#333" /></Svg>
      </div>
      <div className="mr-[11px] ml-[13px] flex size-[13px] items-center justify-center rounded-full bg-[#3b62bd] text-[10px] leading-none font-bold text-white">?</div>
    </div>
  );
}

/* ---------- ribbon ---------- */
const SmallCol = ({ items, c = "" }: { items: [React.ReactNode, string][]; c?: string }) => (
  <div className={`flex flex-col pt-px ${c}`}>
    {items.map(([icon, label], i) => (
      <div key={i} className="flex h-[22px] items-center whitespace-nowrap">
        <div className="flex w-5 shrink-0 items-center">{icon}</div>
        {label}
      </div>
    ))}
  </div>
);

const Big = ({ icon, label, sub, c }: { icon: React.ReactNode; label: string; sub?: React.ReactNode; c: string }) => (
  <div className={`flex shrink-0 flex-col items-center pt-[5px] whitespace-nowrap ${c}`}>
    <div className="flex h-8 items-center">{icon}</div>
    <div className="mt-1 h-[14px] leading-[14px]">{label}</div>
    <div className="flex h-[14px] items-center leading-[14px]">{sub}</div>
  </div>
);

const Group = ({ c, label, labelC, children }: Kids & { c: string; label?: string; labelC?: string }) => (
  <div className={`flex shrink-0 flex-col ${c}`}>
    <div className="flex h-[70px]">{children}</div>
    {label && (
      <div className="flex h-[17px] items-center justify-between pr-2 text-[#1f7391]">
        <span className={labelC}>{label}</span>
        <Arrow />
      </div>
    )}
  </div>
);

function Ribbon() {
  return (
    <div className="flex h-[88px] border-b border-[#d6d6d6] bg-white text-[11px] text-[#222]">
      <Group c="w-[198px]" label="關聯控制" labelC="ml-[70px]">
        <SmallCol c="ml-[13px] w-[96px]" items={[[<FindComp />, "搜尋元件"], [<Proximity />, "按鄰近度開啟"], [<Outline />, "顯示產品輪廓"]]} />
        <Big c="w-[53px] text-[#b9b9b9]" icon={<ProcAsm />} label="處理組立件" />
        <SmallCol c="ml-[10px] w-5" items={[[<SaveComp />, ""], [<SaveComp grey />, ""]]} />
      </Group>
      <VSep c="mt-[5px] h-[78px]" />
      <Group c="w-[190px]" label="元件" labelC="ml-[76px]">
        <Big c="ml-[8px] w-10" icon={<AddComp />} label="新增" />
        <Big c="w-10" icon={<AddComp fresh />} label="新建" />
        <SmallCol c="ml-[6px]" items={[[<NewParent />, "新建父物件"], [<PatternComp />, "規則排列元件"], [<MirrorAsm />, "鏡射組立件"]]} />
      </Group>
      <VSep c="mt-[5px] h-[78px]" />
      <Group c="w-[236px]" label="元件位置" labelC="ml-[88px]">
        <Big c="ml-[6px] w-[56px]" icon={<MoveComp />} label="移動元件" />
        <Big c="w-[58px]" icon={<Constraint />} label="組立件約束" />
        <SmallCol c="ml-[9px]" items={[[<ShowHide />, "顯示和隱藏約束"], [<Remember />, "記住約束"], [<Dof />, "顯示自由度"]]} />
      </Group>
      <VSep c="mt-[5px] h-[78px]" />
      <Group c="w-[157px]" label="常規" labelC="ml-[60px]">
        <SmallCol c="ml-[12px] w-[27px]" items={[[<InfoLink />, ""], [<TreeLock />, ""], [<Disc />, ""]]} />
        <SmallCol c="tracking-[0.1px] [&>div>div]:w-[18px]" items={[[<Wave />, "WAVE 幾何連結器"], [<Arrange />, "組裝安排"], [<Sequence />, "序列"]]} />
      </Group>
      <VSep c="mt-[5px] h-[78px]" />
      <Group c="w-[43px]"><Big c="w-[43px]" icon={<Explode />} label="爆炸圖" sub={<Arrow />} /></Group>
      <VSep c="mt-[5px] h-[78px]" />
      <Group c="w-[68px]"><Big c="w-[70px]" icon={<Dmu />} label="建立 DMU" sub="工作集" /></Group>
      <VSep c="mt-[5px] h-[78px]" />
      <Group c="w-[54px]"><Big c="w-[54px]" icon={<Clearance />} label="餘隙分析" sub={<Arrow />} /></Group>
      <VSep c="mt-[5px] h-[78px]" />
      <Group c="w-[42px]">
        <Big c="w-[42px]" icon={<div className="flex h-[35px] w-[38px] items-center justify-center rounded-[3px] border border-[#d9d9d9]"><More /></div>} label="更多" sub={<Arrow />} />
      </Group>
      <VSep c="mt-[5px] h-[78px]" />
      <div className="mt-[76px] mr-[7px] ml-auto"><Arrow /></div>
    </div>
  );
}

const Combo = ({ text, c }: { text: string; c: string }) => (
  <div className={`flex h-[18px] shrink-0 items-center justify-between border border-[#9b9b9b] bg-white pr-[5px] pl-[3px] ${c}`}>
    <span>{text}</span>
    <Svg w={8} h={5}><path d="M0 .5h8L4 4.800z" fill="#111" /></Svg>
  </div>
);

function SelectionBar() {
  return (
    <div className="flex h-[30px] items-center border-b border-[#8a8a8a] bg-white text-[11px] text-[#222]">
      <div className="ml-[10px] w-5">{I.menu}</div>
      <div className="w-[55px] whitespace-nowrap">功能表(<span className="underline">M</span>)</div>
      <Arrow />
      <VSep c="ml-[6px] h-6" />
      <Combo text="無選取篩選器" c="ml-3 w-[132px]" />
      <Combo text="整個組立件" c="mr-1 ml-[9px] w-[139px]" />
      <Cell k="g1" w="w-[26px]" />
      <Cell k="g2" w="w-[26px]" />
      <Cell k="filt" w="w-4" />
      <Cell k="v" w="w-[18px]" />
      <Cell k="g3" w="w-[23px]" />
      <Cell k="g4" />
      <Cell k="dcube" />
      <Cell k="rect" w="w-[23px]" />
      <Cell k="v" w="w-[14px]" />
      <Cell k="shade" />
      <Cell k="bcube" />
      <Cell k="pts" on />
      <Cell k="end" on />
      <Cell k="mid" on />
      <Cell k="ctrl" />
      <Cell k="poly" on />
      <Cell k="spl" on />
      <Cell k="inter" />
      <Cell k="arc" on />
      <Cell k="quad" />
      <Cell k="exist" on />
      <Cell k="onc" on />
      <Cell k="face" />
      <Cell k="mesh" />
      <Cell k="grid" />
      <VSep c="mr-[7px] ml-[5px] h-6" />
      <Cell k="fit" />
      <Cell k="pan" />
      <Cell k="rot" />
      <Cell k="torch" />
      <Cell k="cpy" />
      <Cell k="win4" w="w-[26px]" />
      <Cell k="v" w="w-[11px]" />
      <Cell k="iron" />
      <Cell k="v" w="w-[11px]" />
      <Cell k="scube" w="w-[26px]" />
      <Cell k="v" w="w-3" />
      <Cell k="clip" w="w-6" />
      <Cell k="v" w="w-3" />
      <VSep c="ml-1 h-6" />
      <div className="mt-[10px] mr-[7px] ml-auto"><Arrow /></div>
    </div>
  );
}

/* ---------- resource bar ---------- */
const Wand = () => (
  <>
    <path d="M11 8l8 12" stroke="#111" strokeWidth={3} />
    <path d="M8.500 4l4 6" stroke="#f4f4f4" strokeWidth={3} />
    <path d="M17.500 17.500l2 3" stroke="#ddd" strokeWidth={1.500} />
    <path d="M6 2l6 5M12 1L7 8" stroke="#fff" strokeWidth={0.800} />
  </>
);

function ResourceBar() {
  return (
    <div className="flex w-8 shrink-0 flex-col items-center border-r border-[#a3a3a3] bg-[#dbdbdb] pl-1">
      <div className="mt-[5px] mr-[6px] h-[47px] pt-px">
        <Svg w={14}>
          <circle cx={7} cy={7} r={4.300} stroke="#333" strokeWidth={1.600} />
          <path d="M7 .5v2M7 11.500v2M.5 7h2M11.500 7h2" stroke="#333" strokeWidth={1.500} />
          <circle cx={7} cy={7} r={1} fill="#333" />
        </Svg>
      </div>
      <div className="h-[41px]">
        <Svg w={22} h={24}>
          <Box x={1} y={0} s={6} />
          <Box x={4} y={5} s={6} />
          <path d="M4 12v11M4 17.500h6M13 11.500h9" stroke="#1c2490" strokeWidth={1.500} />
          <Box x={12} y={14} s={6} c={{ ...GOLD, l: "#f8cf4e" }} />
        </Svg>
      </div>
      <div className="h-[31px]"><Constraint w={21} /></div>
      <div className="-ml-[2px] flex h-[45px] w-[30px] items-center justify-center self-end border border-r-0 border-[#a3a3a3] bg-white">
        <Svg w={22} h={24}>
          <path d="M1 4v6c0 3 9 3 9 0V4" fill="#d77fc1" stroke="#8d2f78" />
          <ellipse cx={5.500} cy={3.800} rx={4.500} ry={2.300} fill="#f0c5e4" stroke="#8d2f78" />
          <path d="M4 13v10M4 18h6M13 9.500h8" stroke="#222a8a" strokeWidth={1.400} />
          <circle cx={16} cy={18} r={4.300} stroke="#8d2f58" strokeWidth={1.300} fill="#fff" />
          <circle cx={16} cy={18} r={1.600} stroke="#8d2f58" />
        </Svg>
      </div>
      <div className="mt-[9px] h-[53px]">
        <Svg w={24} h={23}>
          <path d="M1 7h5.500v15H1z" fill="#f08a2e" stroke="#a9540e" strokeWidth={0.700} />
          <path d="M1 7l6-6h4.500l-5 6z" fill="#fdf3dc" stroke="#b98a4e" strokeWidth={0.600} />
          <path d="M6.500 7l3-3.500V19l-3 3z" fill="#c9661a" />
          <path d="M8 7h5.500v15H8z" fill="#37c24a" stroke="#1a7a2b" strokeWidth={0.700} />
          <path d="M8 7l5-6h4.500l-4 6z" fill="#f3fbe9" stroke="#5b9a57" strokeWidth={0.600} />
          <path d="M13.500 7l2.500-3.500V19l-2.500 3z" fill="#22923a" />
          <path d="M15.500 7H20v15h-4.500z" fill="#3f9ae6" stroke="#17549a" strokeWidth={0.700} />
          <path d="M15.500 7l4-6H23l-3 6z" fill="#eef6fd" stroke="#4e7fb5" strokeWidth={0.600} />
          <path d="M20 7l3-6v15l-3 6z" fill="#1d62b4" />
          <path d="M1.500 10.500h4.500M8.500 10.500h4.500M16 10.500h3.500M1.500 18h4.500M8.500 18h4.500M16 18h3.500" stroke="#fff8d0" strokeWidth={0.800} />
        </Svg>
      </div>
      <div className="h-[55px]">
        <Svg w={24} h={25}>
          <path d="M9 7c4 0 7 3 7 7M10 3.500c5 0 10 4 10 10M10 .8c7 0 12.500 5 12.500 11" stroke="#3e63b4" strokeWidth={2} />
          <circle cx={8} cy={16} r={7.500} fill="#2379d2" stroke="#14509a" />
          <path d="M6 14h3v6M5.500 20.500h5.500" stroke="#fff" strokeWidth={2} />
          <circle cx={8} cy={11} r={1.500} fill="#fff" />
        </Svg>
      </div>
      <div className="h-[54px]">
        <Svg w={18} h={22}>
          <path d="M.8.800h11l5.500 5.500v15H.8z" fill="#f8fbff" stroke="#3d68ae" strokeWidth={1.300} />
          <path d="M11.500 1v5.500H17" stroke="#3d68ae" />
          <circle cx={9} cy={13.500} r={5.300} fill="#3f8fd0" />
          <path d="M4 13c1-3 3-4 5-4.500l-1 3 2 2-2 5c-2-1-4-3-4-5.500zM11 11l3 1c0 3-1 5-3 6z" fill="#3fa044" />
        </Svg>
      </div>
      <div className="h-[43px]">
        <Svg w={23}>
          <circle cx={11.500} cy={11.500} r={10.500} fill="#dbe9fa" stroke="#5a5f68" strokeWidth={1.800} />
          <circle cx={11.500} cy={11.500} r={8} stroke="#7b8aa0" strokeDasharray="1 3.190" strokeWidth={1.400} />
          <path d="M11.500 3.500v8H18" stroke="#1d2c55" strokeWidth={1.800} />
        </Svg>
      </div>
      <div className="h-[42px]">
        <Svg w={21} h={23}>
          <defs>
            <linearGradient id="spectrum" x1="0" y1="0" x2="0" y2="1">
              <stop offset="0" stopColor="#e8291c" />
              <stop offset="0.300" stopColor="#f7e01d" />
              <stop offset="0.550" stopColor="#3fe02e" />
              <stop offset="0.750" stopColor="#1fc3e6" />
              <stop offset="1" stopColor="#1530e0" />
            </linearGradient>
          </defs>
          <rect width={8} height={22.500} fill="url(#spectrum)" />
          <Wand />
        </Svg>
      </div>
      <div className="h-[41px]">
        <Svg w={23} h={22}>
          <path d="M2 1h5v16H2zM2 4h5M2 7h5M2 10h5M2 13h5" fill="#6fb0e4" stroke="#2b6fae" />
          <path d="M8 5h14l-4 3H10M8 11l8-1" stroke="#3a6fc0" strokeWidth={1.300} />
          <path d="M1 19l4-1 3 2" stroke="#c9b03a" strokeWidth={1.500} />
          <Wand />
        </Svg>
      </div>
      <div>
        <Svg w={20} h={23}>
          <path d="M9 3l5-2 5 3-1 3-2-3-4 1-3 4 4 6M12 5L7 10" stroke="#444" strokeWidth={1.200} />
          <path d="M14 4l1 5" stroke="#777" />
          <path d="M6 12l6 1 3 5 1 3H6l-3-4z" fill="#b9b9c6" stroke="#666" />
          <path d="M1 12l4 3-4 2z" fill="#6b4fb0" />
          <path d="M4 17.500l6-1" stroke="#c9564c" strokeWidth={1.400} />
          <path d="M1 19h6l-1 3.500H2z" fill="#f0a93a" />
        </Svg>
      </div>
    </div>
  );
}

/* ---------- part navigator ---------- */
type Row = { kind?: "top" | "child"; exp?: string; icon?: React.ReactNode; label?: string; dim?: boolean; ok?: boolean };

const rows: Row[] = [
  {
    kind: "top", exp: "+", label: "模型視圖",
    icon: (
      <Svg w={16}>
        <path d="M7 .8l6 2.700v7L7 14 1 10.500v-7zM1 3.500l6 2.700 6-2.700M7 .8V14M1 10.500l6-4 6 4" stroke="#2b9a6c" strokeWidth={1.200} />
        <path d="M9 12l6 2.500" stroke="#d2453c" strokeWidth={1.800} />
      </Svg>
    ),
  },
  {
    kind: "top", exp: "+", label: "攝像機",
    icon: (
      <div className="flex items-center gap-px pl-px">
        <Check />
        <Svg w={15}>
          <path d="M1 5l12-4v11L1 14z" fill="#f4dede" stroke="#c9302c" strokeWidth={1.300} />
          <circle cx={7} cy={6} r={2.500} fill="#8c93a8" stroke="#333" />
          <path d="M5 8h7l2 2v3H7z" fill="#6b7186" stroke="#222" strokeWidth={0.800} />
        </Svg>
      </div>
    ),
  },
  {
    kind: "top", exp: "−", label: "模型歷程記錄",
    icon: (
      <Svg w={16} h={14}>
        <path d="M1 2h5l1.500 2H13v9H1z" fill="#f3c94c" stroke="#9a7317" />
        <path d="M1 13L4 6.500h11.500L13 13z" fill="#fbe391" stroke="#9a7317" />
      </Svg>
    ),
  },
  {
    kind: "child", label: "基準座標系 (0)", dim: true, ok: true,
    icon: (
      <Svg w={15}>
        <path d="M2 1l2 10 9 3M4 11L14 6M4 5l5 5" stroke="#333" strokeWidth={1.100} />
        <path d="M0 0l4 1-2 3zM14 15l-3-.500 1-3zM15 5l-3.500 0 1.500 2.500z" fill="#333" />
      </Svg>
    ),
  },
  {
    kind: "child", label: '草圖 (1) "SKETCH_00...', dim: true, ok: true,
    icon: (
      <Svg w={15}>
        <path d="M1 1.500h5v4H1zM1 8.500h4v5H1zM7 8.500h6.500v5H7z" fill="#fff" stroke="#222" strokeWidth={1.200} />
        <path d="M8 8l5-6 1.500 1L10 8.500z" fill="#f3bf3e" stroke="#a0701a" strokeWidth={0.700} />
      </Svg>
    ),
  },
  {
    kind: "child", label: "拉伸 (2)", ok: true,
    icon: (
      <Svg w={15} h={14}>
        <path d="M1 3l3-2h8l2 2v8l-2 2H4l-3-2z" fill="#f6a534" stroke="#a95d10" />
        <path d="M4 3.500v9M7.500 3v10M11 3.500v9" stroke="#fdd79a" strokeWidth={1.300} />
        <path d="M5.700 3.500v9M9.300 3.500v9" stroke="#a95d10" strokeWidth={0.800} />
      </Svg>
    ),
  },
  ...Array.from({ length: 29 }, () => ({})),
];

function TreeRow({ r, i }: { r: Row; i: number }) {
  return (
    <div className={`flex shrink-0 border-b border-[#e9e9e9] ${i === 34 ? "h-[18px] border-b-0" : "h-5"} ${i % 2 ? "bg-[#f9f9f9]" : "bg-white"}`}>
      <div className="flex w-[200px] items-center border-r border-[#dedede] whitespace-nowrap">
        {r.kind === "top" && (
          <>
            <div className="ml-[5px] flex size-[9px] items-center justify-center border border-[#c9c9c9] bg-white">
              <Svg w={7}>
                <path d="M1 3.500h5" stroke="#222" />
                {r.exp === "+" && <path d="M3.500 1v5" stroke="#222" />}
              </Svg>
            </div>
            <div className="mr-[2px] w-[3px] border-t border-dotted border-[#999]" />
            <div className={r.label === "攝像機" ? "mr-1" : "mr-1"}>{r.icon}</div>
            {r.label}
          </>
        )}
        {r.kind === "child" && (
          <>
            <div className="ml-[28px] flex h-5 w-[12px] flex-col border-l border-dotted border-[#999]">
              <div className="mt-[10px] h-[10px] w-[9px] border-t border-dotted border-[#999]" />
            </div>
            <div className="mr-[3px] flex size-3 items-center justify-center border border-[#222] bg-white"><Check /></div>
            <div className="w-[18px]">{r.icon}</div>
            <span className={r.dim ? "text-[#9b9b9b]" : ""}>{r.label}</span>
          </>
        )}
      </div>
      <div className="flex w-[100px] items-center border-r border-[#dedede] pl-[5px]">{r.ok && <Check />}</div>
    </div>
  );
}

function Navigator() {
  return (
    <div className="flex w-[358px] shrink-0 flex-col bg-white pr-[9px] pl-[6px] text-[12px] text-[#222]">
      <div className="flex h-[28px] items-center justify-between pt-[2px] pr-[7px] pl-[4px]">
        <span>零件導覽器</span>
        <Svg w={12} h={12}><path d="M.6.600h10.800v10.800H.6z" stroke="#222" strokeWidth={1.200} /><path d="M0 1h12" stroke="#222" strokeWidth={2} /></Svg>
      </div>
      <div className="flex h-[736px] flex-col border border-[#cfcfcf] pr-px pl-px">
        <div className="flex h-[20px] shrink-0 items-center border-b border-[#cfcfcf] bg-[#f0f0f0]">
          <div className="flex h-full w-[200px] items-center border-r border-[#cfcfcf] pt-[2px] pl-[6px]">
            名稱
            <span className="ml-[17px]"><Svg w={10} h={6}><path d="M0 5.500h10L5 0z" fill="#222" /></Svg></span>
          </div>
          <div className="flex h-full w-[100px] items-center border-r border-[#cfcfcf] pt-[2px] pl-[6px]">最新</div>
          <div className="pt-[2px] pl-[6px]">附註</div>
        </div>
        <div className="flex min-h-0 flex-1 flex-col overflow-hidden">
          {rows.map((r, i) => <TreeRow key={i} r={r} i={i} />)}
        </div>
        <div className="mb-px flex h-[16px] shrink-0 items-center bg-[#f0f0f0] pr-[5px] pl-[5px]">
          <Svg w={6} h={9}><path d="M5 .8L1.200 4.500 5 8.200" stroke="#333" strokeWidth={1.700} /></Svg>
          <div className="mr-auto ml-[6px] h-[15px] w-[258px] bg-[#cdcdcd]" />
          <Svg w={6} h={9}><path d="M1 .8l3.800 3.700L1 8.200" stroke="#333" strokeWidth={1.700} /></Svg>
        </div>
      </div>
      <div className="h-[6px] shrink-0 border border-[#a9a9a9] bg-[#d6d6d6]" />
      {["相關性", "細節", "預覽"].map((t) => (
        <div key={t} className="flex h-6 shrink-0 items-center justify-between border-b-2 border-[#cfcfcf] pr-[6px] pl-[7px] text-[13.5px] text-[#1f6f86]">
          {t}
          <Svg w={11} h={10}><path d="M1 .8l4.500 7.500L10 .8" stroke="#1b6a80" strokeWidth={2} /></Svg>
        </div>
      ))}
    </div>
  );
}

/* ---------- graphics area ---------- */
const PartIcon = () => (
  <Svg w={15}>
    <path d="M1 4l4-3 4 1v5l5 2v3l-5 3-8-3z" fill="#2f63d8" stroke="#163a92" strokeWidth={0.700} />
    <path d="M1 4l4 1.500 4-3.500M5 5.500V10l4 1.500 5-2.500" stroke="#a9c4fa" strokeWidth={0.900} />
  </Svg>
);
const ModIcon = ({ c = "#222" }: { c?: string }) => (
  <Svg w={10} h={11}>
    <path d="M7 10H1V2h7v2" stroke={c} strokeWidth={1.200} />
    <path d="M3 1h3.500" stroke={c} strokeWidth={1.800} />
    <path d="M5.500 8l4-3.500M9 6.500L7 10" stroke={c} strokeWidth={1} />
  </Svg>
);

function DocTabs() {
  const others: [string, string][] = [
    ["組合件(三角架).prt", "w-[164px]"],
    ["組合件(底板).prt", "w-[151px]"],
    ["組合件(握把).prt", "w-[151px]"],
    ["組合件(銷).prt", "w-[151px]"],
  ];
  return (
    <div className="flex h-[21px] shrink-0 border-b-2 border-[#6a9fa6] bg-white text-[12px] whitespace-nowrap text-[#222]">
      <div className="flex w-[163px] items-center bg-[#559fb5] pl-[7px] text-white">
        <PartIcon />
        <span className="ml-[5px]">組合件(三角板).prt</span>
        <span className="ml-[6px]"><ModIcon c="#fff" /></span>
        <span className="ml-[7px]"><Svg w={8}><path d="M.8.800l6.400 6.400M7.200.800L.8 7.200" stroke="#fff" strokeWidth={1.800} /></Svg></span>
      </div>
      {others.map(([t, w]) => (
        <div key={t} className={`flex items-center pl-[7px] ${w}`}>
          <PartIcon />
          <span className="mr-[6px] ml-[5px]">{t}</span>
          <ModIcon />
        </div>
      ))}
    </div>
  );
}

function Scene() {
  return (
    <svg width={1530} height={827} viewBox="391 189 1530 827" fill="none" className="block">
      <defs>
        <linearGradient id="rim" gradientUnits="userSpaceOnUse" x1="1045" y1="365" x2="1150" y2="280">
          <stop offset="0" stopColor="#768589" />
          <stop offset="0.250" stopColor="#86989d" />
          <stop offset="0.550" stopColor="#a9c1c8" />
          <stop offset="1" stopColor="#adc6cc" />
        </linearGradient>
        <linearGradient id="bore" gradientUnits="userSpaceOnUse" x1="1190" y1="342" x2="1160" y2="450">
          <stop offset="0" stopColor="#566365" />
          <stop offset="0.350" stopColor="#728184" />
          <stop offset="0.600" stopColor="#8ea0a4" />
          <stop offset="0.850" stopColor="#aec4ca" />
          <stop offset="1" stopColor="#afc8ce" />
        </linearGradient>
        <linearGradient id="seen" gradientUnits="userSpaceOnUse" x1="0" y1="341" x2="0" y2="451">
          <stop offset="0" stopColor="#c3c4c5" />
          <stop offset="1" stopColor="#cdced0" />
        </linearGradient>
      </defs>
      <g stroke="#2b3234" strokeWidth={0.800} strokeLinejoin="round">
        <path d="M1041 364.500C1051 329 1068 309 1090 295C1118 277 1150 273 1181 286L1167 291L1080 350L1059.500 371z" fill="url(#rim)" />
        <path d="M1041 364.500L877 955L896 961.500L1059.500 371z" fill="#7a898c" />
        <path d="M1059.500 371C1067 342 1083 320 1105 305C1126 289 1148 284 1168 285C1208 287 1237 311 1250 343L1461.500 887L896 961.500z" fill="#8fa1a5" />
        <path d="M1106 400C1106 368 1128 341 1159 341C1187 341 1207 365 1207 392C1207 425 1182 451.500 1153 451.500C1126 451.500 1106 429 1106 400z" fill="url(#bore)" />
        <path d="M1106 400C1106 368 1128 341 1159 341L1165.500 341.500C1180 351 1187.500 367 1187.500 386C1187.500 418 1162 445.500 1130 444.500C1115 436 1106 419 1106 400z" fill="url(#seen)" />
      </g>
      {/* orientation triad */}
      <path d="M422 951l14-5 22 3v24l-22 4-14-4zM422 951l12 3v22M434 954l24-5M422 973l14-4 22 4" fill="#d5d6d8" stroke="#a9a9ab" />
      <path d="M458 948l-20-6" stroke="#2e8f3c" strokeWidth={2} />
      <path d="M448 947l-10-6 1-1 12 4z" fill="#2e8f3c" />
      <path d="M458 948l-32 4" stroke="#d4232a" strokeWidth={2.500} />
      <path d="M417 953l12-4v6z" fill="#b3202a" />
      <path d="M458.500 950v30" stroke="#1330cf" strokeWidth={1.800} />
      <path d="M455 975h7l-3 16z" fill="#1330cf" />
      <circle cx={458} cy={948} r={4} fill="#f3f3f3" stroke="#aaa" strokeWidth={0.600} />
      <g fontFamily="Open Sans, sans-serif" fontSize={12}>
        <text x={409} y={957.500} fill="#c9302c">X</text>
        <text x={431.500} y={944} fill="#2f7f3a">Y</text>
        <text x={455.500} y={1001} fill="#3947d6">Z</text>
      </g>
      {/* locate cursor */}
      <circle cx={677} cy={694} r={12} stroke="#333" strokeDasharray="14.500 4.300" strokeDashoffset={-2.200} />
      <path d="M676 679.500h2.500v13.500h13.500v2.500h-13.500v13.500h-2.500v-13.500h-13.500v-2.500h13.500z" fill="#fff" stroke="#222" />
    </svg>
  );
}

function Viewport() {
  return (
    <div className="relative min-h-0 flex-1 overflow-hidden border-l border-[#8f8f8f] bg-linear-to-b from-[#b3b4b5] from-0% via-[#e3e4e5] via-65% to-[#e6e8ea] to-80%">
      <Scene />
      <div className="absolute top-[304px] left-[532px] origin-left scale-x-[0.9] font-['Noto_Serif_CJK_TC','Liberation_Serif',serif] text-[64px] leading-[90px] font-light whitespace-nowrap text-black">40823208</div>
      <div className="absolute top-[307px] left-[795px] font-['Noto_Serif_CJK_TC','Noto_Sans_CJK_TC',serif] text-[63.5px] leading-[90px] font-light whitespace-nowrap text-black">李翊帆</div>
    </div>
  );
}

export default function App() {
  return (
    <div className="flex h-[1028px] w-[1921px] flex-col overflow-hidden bg-white font-['Open_Sans','Noto_Sans_CJK_TC',sans-serif]">
      <TitleBar />
      <TabBar />
      <Ribbon />
      <SelectionBar />
      <div className="flex h-[848px] shrink-0">
        <ResourceBar />
        <Navigator />
        <div className="flex min-w-0 flex-1 flex-col">
          <DocTabs />
          <Viewport />
        </div>
      </div>
      <div className="flex h-3 shrink-0 items-start justify-end gap-[5px] overflow-hidden border-t border-[#a3a3a3] bg-white pt-[2px] pr-[55px]">
        <Svg w={16}>
          <rect x={0.500} y={0.500} width={15} height={15} fill="#ececec" stroke="#bbb" />
          <path d="M3 4l2 4 2-4 2 4 2-4 2 4M3 9h10" stroke="#888" />
        </Svg>
        <FullIcon />
      </div>
    </div>
  );
}
